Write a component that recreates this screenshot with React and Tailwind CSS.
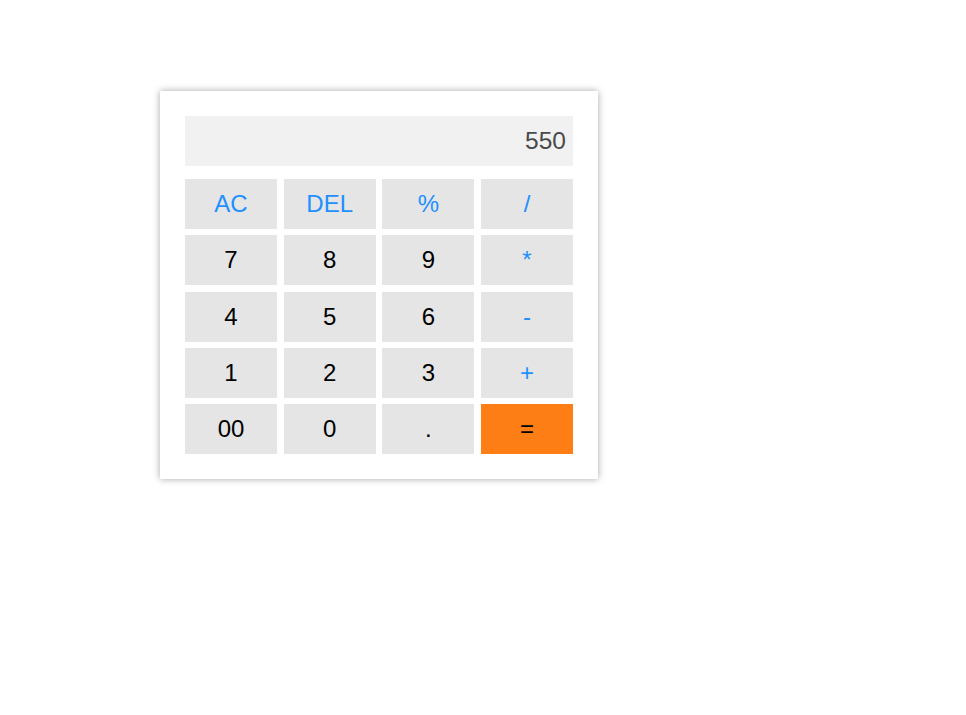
export default function App() {
  const rows = [
    [["AC", "op"], ["DEL", "op"], ["%", "op"], ["/", "op"]],
    [["7"], ["8"], ["9"], ["*", "op"]],
    [["4"], ["5"], ["6"], ["-", "op"]],
    [["1"], ["2"], ["3"], ["+", "op"]],
    [["00"], ["0"], ["."], ["=", "eq"]],
  ];
  return (
    <div className="min-h-[715px] bg-white pl-[160px] pt-[91px]" style={{ fontFamily: '"Liberation Sans", Arial, sans-serif' }}>
      <div className="w-[438px] bg-white p-[25px] shadow-[0_0_7px_rgba(0,0,0,0.35)]">
        <div className="flex h-[50px] items-center justify-end bg-[#f1f1f1] pr-[7px] text-[24.5px] text-[#4a4a4a]">550</div>
        <div className="mt-[13px] grid grid-cols-4 gap-x-[6.67px] gap-y-[6.25px]">
          {rows.flat().map(([label, kind]) => (
            <button
              key={label}
              className={
                "flex h-[50px] items-center justify-center text-[24px] " +
                (kind === "eq"
                  ? "bg-[#fd7e14] text-black"
                  : kind === "op"
                  ? "bg-[#e5e5e5] text-[#1e90ff]"
                  : "bg-[#e5e5e5] text-black")
              }
            >
              {label}
            </button>
          ))}
        </div>
      </div>
    </div>
  );
}
